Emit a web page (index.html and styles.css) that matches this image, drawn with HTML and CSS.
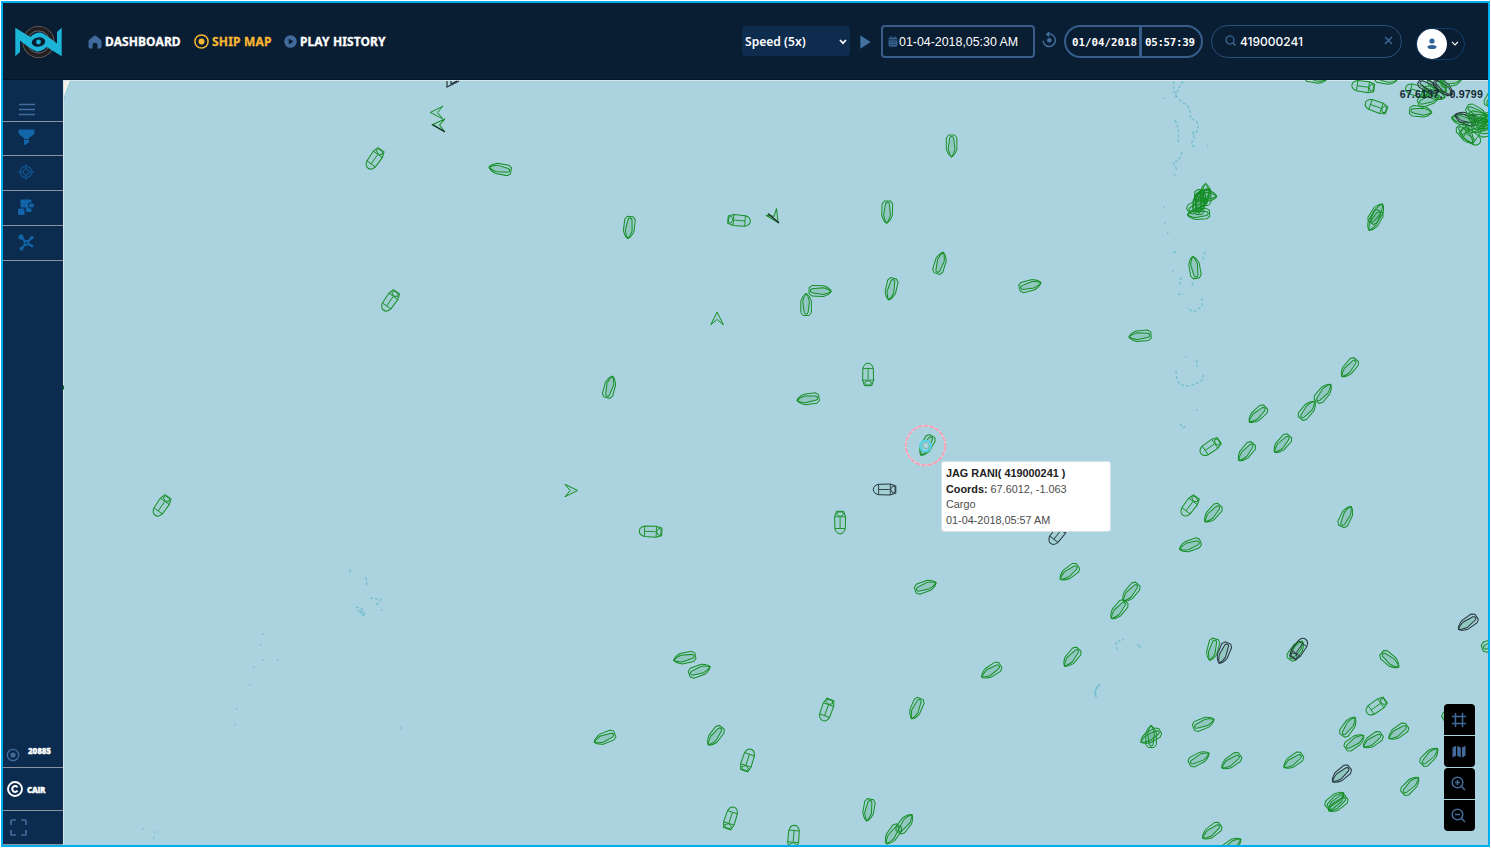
FILE: index.html
```
<!DOCTYPE html>
<html lang="en">
<head>
<meta charset="utf-8">
<title>Ship Map</title>
<link rel="stylesheet" href="styles.css">
</head>
<body>
<div class="app">
  <header class="header">
    <svg class="logo" viewBox="0 0 48 34" fill="none">
      <circle cx="24" cy="17" r="13.3" stroke="#6a6465" stroke-width="5.400"/>
      <circle cx="24" cy="17" r="13.3" stroke="#231f20" stroke-width="3.800"/>
      <path d="M24 7.500Q17 8 11 16.500L17 22Q24 29 33 20L37 16Q30 8 24 7.500Z" fill="#091d33"/>
      <path d="M.8 2.700 19 14Q15.500 18 19 20.500 24 24 31 18.500L34.500 15.500 36.500 17.500Q29 27 22 26.500 18 25.500 5.500 15.500V27L.8 31.200Z" fill="#1cb5d8"/>
      <path d="M47.200 31.200 29 20Q32.500 16 29 13.500 24 10 17 15.500L13.500 18.500 11.500 16.500Q19 7 26 7.500 30 8.500 42.500 18.500V7L47.200 2.700Z" fill="#1cb5d8"/>
      <circle cx="24" cy="17" r="3.900" fill="#091d33"/><circle cx="24" cy="17" r="2.400" fill="#1cb5d8"/>
    </svg>
    <nav class="nav">
      <a class="nav-item">
        <svg width="14" height="14" viewBox="0 0 14 14"><path d="M7 .5q.6 0 1.200.5l4.500 3.700q.8.700.8 1.600v5.500q0 1.700-1.700 1.700H9.500V10q0-2.300-2.500-2.300T4.500 10v3.500H2.200Q.5 13.500.5 11.800V6.300q0-.9.8-1.600L5.800 1Q6.400.5 7 .5Z" fill="#416b9c"/></svg>
        <span class="label w-dash">DASHBOARD</span></a>
      <a class="nav-item active">
        <svg width="15" height="15" viewBox="0 0 15 15"><circle cx="7.500" cy="7.500" r="6.600" fill="none" stroke="#f7b733" stroke-width="1.500"/><circle cx="7.500" cy="7.500" r="3" fill="#f7b733"/></svg>
        <span class="label w-ship">SHIP MAP</span></a>
      <a class="nav-item">
        <svg width="13" height="13" viewBox="0 0 13 13"><circle cx="6.500" cy="6.500" r="6.300" fill="#416b9c"/><path d="M5.200 4.200 8.800 6.500 5.200 8.800Z" fill="#091d33" stroke="#091d33" stroke-linejoin="round"/></svg>
        <span class="label w-play">PLAY HISTORY</span></a>
    </nav>
    <div class="speed"><span>Speed (5x)</span>
      <svg width="8" height="6" viewBox="0 0 8 6"><path d="M1 1 4 4.200 7 1" fill="none" stroke="#fff" stroke-width="1.700"/></svg>
    </div>
    <svg class="play" width="11" height="14" viewBox="0 0 11 14"><path d="M.3.300 10.700 7 .3 13.700Z" fill="#41719f"/></svg>
    <div class="date">
      <svg width="10" height="11" viewBox="0 0 9 11"><path d="M0 3.500V3q0-1.500 1.500-1.500H2V0h1v1.500h3V0h1v1.500h.5Q9 1.500 9 3v.5ZM0 4.300h9V9q0 1.800-1.800 1.800H1.800Q0 10.800 0 9Z" fill="#35618f"/><path d="M1.800 6h1m1.200 0h1m1.200 0h1M1.800 8.500h1m1.200 0h1m1.200 0h1" stroke="#091d33" stroke-width=".8"/></svg>
      <span>01-04-2018,05:30 AM</span></div>
    <svg class="refresh" width="15" height="16" viewBox="0 0 15 16"><path d="M6 2.200A6.200 6.200 0 1 1 1 8.800" fill="none" stroke="#41719f" stroke-width="1.400"/><path d="M7.300 0 4.800 2.300 7.300 4.600" fill="none" stroke="#41719f" stroke-width="1.400"/><circle cx="7.300" cy="8.200" r="2.300" fill="#41719f"/></svg>
    <div class="clock"><span class="clock-date">01/04/2018</span><span class="clock-time">05:57:39</span></div>
    <div class="search">
      <svg width="11" height="11" viewBox="0 0 11 11" fill="none" stroke="#41719f" stroke-width="1.200"><circle cx="5" cy="5" r="4"/><path d="m8 8 2.500 2.500"/></svg>
      <span>419000241</span>
      <svg class="clear" width="9" height="9" viewBox="0 0 9 9"><path d="m1 1 7 7M8 1 1 8" stroke="#41719f" stroke-width="1.200"/></svg>
    </div>
    <div class="user"><div class="avatar"><svg width="10" height="12" viewBox="0 0 10 12" fill="#2f639c"><circle cx="5" cy="3" r="2.600"/><ellipse cx="5" cy="9" rx="4.500" ry="2"/></svg></div>
      <svg width="8" height="5" viewBox="0 0 8 5"><path d="M1 .8 4 3.800 7 .8" fill="none" stroke="#fff" stroke-width="1.200"/></svg></div>
  </header>
  <div class="body">
    <aside class="side">
      <div class="tool menu"><svg width="18" height="13" viewBox="0 0 18 13"><path d="M1 1.500h16M1 6.500h16M1 11.500h16" stroke="#416b9c" stroke-width="1.700"/></svg></div>
      <div class="tool"><svg width="17" height="17" viewBox="0 0 17 17" fill="#1165a8"><path d="M.5 1.500Q.5.500 1.500.500h14q1 0 1 1v2Q16.500 5 15 6l-4 3v1.200H6V9L2 6Q.5 5 .5 3.500ZM6 11h5v2q0 .7-.7 1L7 16q-1 .3-1-.7Z"/></svg></div>
      <div class="tool"><svg width="16" height="16" viewBox="0 0 16 16" fill="none" stroke="#114f87" stroke-width="1.400"><circle cx="8" cy="8" r="5.800"/><circle cx="8" cy="8" r="2.800"/><path d="M8 0v6M8 10v6M0 8h6M10 8h6"/></svg></div>
      <div class="tool"><svg width="17" height="17" viewBox="0 0 17 17" fill="#1165a8"><rect x="0" y="9.500" width="6.500" height="6.500" rx="1.200"/><path d="M3.500.500H12q1.500 0 1.500 1.500v1.500h-2Q10 4 10 6.500q0 2.500 1.500 3H13.500v2.500q0 1-1 1H9q-1 0-1-1V8.500H3.500q-1 0-1-1v-6q0-1 1-1Z"/><rect x="11" y="4.500" width="5" height="4" rx="1.800"/></svg></div>
      <div class="tool"><svg width="17" height="17" viewBox="0 0 17 17" fill="#1165a8" stroke="#1165a8"><circle cx="3" cy="3" r="2.200"/><circle cx="14" cy="3.500" r="1.300"/><circle cx="3.500" cy="14.800" r="1.500"/><circle cx="14" cy="12" r="1"/><path d="m3 3 5.500 6 5.500-5.500M8.500 9l-5 5.500M8.500 9l5.500 3" fill="none" stroke-width="2"/><circle cx="8.500" cy="9" r="2.500"/><circle cx="8.500" cy="9" r="1.100" fill="#0c2c4f" stroke="none"/></svg></div>
      <div class="side-space"></div>
      <div class="count"><svg width="14" height="14" viewBox="0 0 14 14"><circle cx="7" cy="7" r="5.700" fill="none" stroke="#416b9c" stroke-width="1.300"/><circle cx="7" cy="7" r="2.500" fill="#416b9c"/></svg><b>20885</b></div>
      <div class="credit"><svg width="16" height="16" viewBox="0 0 16 16" fill="none" stroke="#fff"><circle cx="8" cy="8" r="7" stroke-width="1.900"/><path d="M10.500 6.300A2.900 2.900 0 1 0 10.500 9.700" stroke-width="2"/></svg><b>CAIR</b></div>
      <div class="full"><svg width="17" height="17" viewBox="0 0 17 17" fill="none" stroke="#416b9c" stroke-width="1.700"><path d="M1 6V2q0-1 1-1h4M11 1h4q1 0 1 1v4M16 11v4q0 1-1 1h-4M6 16H2q-1 0-1-1v-4"/></svg></div>
    </aside>
    <main class="map">
      <svg class="chart" id="chart" viewBox="63 80 1425 765">
        <defs>
          <g id="cargo"><path d="M0-11.200Q3-10 5.300-3.500V8L3 11H-3L-5.300 8V-3.500Q-3-10 0-11.200Z" fill="#0a8a1a" fill-opacity=".03"/><path d="M0-11Q2-9 3.400-3L2 8 1 9.500H-1L-2 8-3.400-3Q-2-9 0-11Z" fill="#0a8a1a" fill-opacity=".12"/></g>
          <g id="tanker"><path d="M-5.200-6Q-4-11.300 0-11.300T5.200-6L5.500 5.500 3.700 11.200H-3.700L-5.500 5.500Z" fill="#0a8a1a" fill-opacity=".05"/><path d="M-5.200-6H5.200M0-6V5M-5.500 5.700H5.500M-3.500 8 0 6 3.500 8 2.500 10.500H-2.500Z" fill="none" stroke-width=".9"/></g>
          <path id="arrow" d="M0-6.500 6.300 6.200 0 1-6.300 6.200Z" fill="#0a8a1a" fill-opacity=".06"/>
        </defs>
        <path d="M63 80h8L65 97 63 99Z" fill="#f5efe9"/><path d="M71 80 65.500 94 63.500 100" fill="none" stroke="#7dc4d6"/>
        <path d="M63 80.500H1488M63.500 80V845" stroke="#d3e6ec" stroke-width="1"/>
        <g id="reefs" fill="none" stroke="#73bdd0" stroke-width="1.300"></g>
        <g id="ships" transform="translate(-.4 .5)"></g>
        <path d="M447 81v6l12-6M451 81v3l6-3" fill="none" stroke="#26343b" stroke-width="1.200"/>
        <path d="M432.500 124.500 445 132M768 213.500l11 9.500" fill="none" stroke="#1c2a2c" stroke-width="1.400"/>
        <path d="M63 385.500h1v4h-1" fill="#0a6a2a"/>
        <circle cx="925.500" cy="445.500" r="19.700" fill="none" stroke="#e6dfe6" stroke-width="1.900"/>
        <circle cx="925.500" cy="445.500" r="19.700" fill="none" stroke="#f993ab" stroke-width="1.500" stroke-dasharray="5 1"/>
        <circle cx="925.500" cy="446" r="5.500" fill="#9ddcea" fill-opacity=".6" stroke="#4fd5f0" stroke-width="1.600"/>
        <circle cx="926" cy="445.500" r="3" fill="#b0d7df" stroke="#6daebd" stroke-width=".8"/>
      </svg>
      <div class="coords">67.6137, -0.9799</div>
      <div class="tip"><b>JAG RANI( 419000241 )</b><span><b>Coords:</b> 67.6012, -1.063</span><span>Cargo</span><span>01-04-2018,05:57 AM</span></div>
      <div class="controls">
        <button><svg width="16" height="16" viewBox="0 0 16 16"><path d="M4.500 1v14M11.500 1v14M1 4.500h14M1 11.500h14"/></svg></button>
        <button><svg width="14" height="13" viewBox="0 0 14 13"><path d="M.5 2.500 4 .800v10L.5 12.500ZM5.200.800 8.800 2.500v10L5.200 10.800ZM10 2.500 13.500.800v10L10 12.500Z" fill="#426b9c" stroke="none"/></svg></button>
        <button><svg width="15" height="15" viewBox="0 0 15 15"><circle cx="6.500" cy="6.500" r="5.300"/><path d="m10.500 10.500 3.500 3.500M4 6.500h5M6.500 4v5"/></svg></button>
        <button><svg width="15" height="15" viewBox="0 0 15 15"><circle cx="6.500" cy="6.500" r="5.300"/><path d="m10.500 10.500 3.500 3.500M4 6.500h5"/></svg></button>
      </div>
    </main>
  </div>
</div>
<script src="map.js"></script>
</body>
</html>
```
FILE: styles.css
```
* { box-sizing: border-box; }
body { margin: 0; padding: 1px; background: #fff; font-family: "Open Sans", sans-serif; }
svg { display: block; flex: none; }
.app { width: 1489px; height: 846px; border: 2px solid #00aeef; display: flex; flex-direction: column; overflow: hidden; }
.header { height: 77px; flex: none; background: #091d33; border-bottom: 1px solid #041326; display: flex; align-items: center; padding-left: 11px; padding-top: 1px; color: #fff; }
.logo { width: 49px; height: 34px; }
.nav { display: flex; gap: 12px; margin-left: 25px; width: 654px; }
.nav-item { display: flex; align-items: center; gap: 3px; color: #fff; }
.label { font: 700 12px/18px "Noto Sans", sans-serif; white-space: nowrap; -webkit-text-stroke: .3px; }
.active { color: #f7b733; }
.w-dash { width: 77px; letter-spacing: .1px; }
.w-ship { width: 60px; letter-spacing: .2px; }
.w-play { width: 90px; letter-spacing: .1px; }
.speed { width: 108px; height: 30px; background: #0d2c4e; border-radius: 4px; display: flex; align-items: center; justify-content: space-between; padding: 2px 3px 0; font: 600 12.100px "Noto Sans", sans-serif; margin: 0 10px 2px 0; }
.date { width: 154px; height: 33px; border: 2px solid #365d8b; border-radius: 4px; display: flex; align-items: center; padding-left: 5px; gap: 1px; margin-left: 10px; font: 12.400px "Liberation Sans", sans-serif; white-space: nowrap; }
.refresh { margin: 0 7px 3px 7px; }
.clock { width: 139px; height: 33px; border: 2px solid #365d8b; border-radius: 17px; display: flex; align-items: stretch; font: 700 10.800px/31px "DejaVu Sans Mono", monospace; white-space: nowrap; }
.clock-date { width: 76px; border-right: 3px solid #365d8b; padding-left: 6px; }
.clock-time { padding-left: 3px; letter-spacing: -.3px; }
.search { width: 191px; height: 33px; border: 1px solid #2b5079; border-radius: 17px; margin-left: 8px; display: flex; align-items: center; padding: 0 8px 2px 13px; font: 500 12px Inter, sans-serif; }
.search span { margin: 2px 0 0 4px; }
.clear { margin-left: auto; }
.user { width: 49px; height: 32px; border: 1px solid #123d68; border-radius: 16px; margin: 4px 0 0 14px; display: flex; align-items: center; gap: 4px; }
.avatar { width: 30px; height: 30px; border-radius: 50%; background: #fff; display: flex; align-items: center; justify-content: center; }
.body { display: flex; flex: 1; min-height: 0; }
.side { width: 60px; background: #0c2c4f; display: flex; flex-direction: column; flex: none; }
.tool { height: 35px; flex: none; border-bottom: 1px solid #8a959f; padding: 8px 0 0 15px; }
.menu { height: 41.500px; padding-top: 22.500px; }
.menu + .tool { height: 34.500px; padding-top: 7px; }
.side-space { flex: 1; }
.side b { color: #fff; font: 900 8px "Open Sans", sans-serif; letter-spacing: -.3px; -webkit-text-stroke: .3px; }
.count { height: 27px; border-bottom: 1px solid #8a959f; display: flex; padding-left: 3px; gap: 8px; }
.count svg { margin-top: 7px; }
.count b { margin-top: 4px; letter-spacing: -.1px; }
.credit { height: 43px; border-bottom: 1px solid #8a959f; display: flex; align-items: center; gap: 4px; padding-left: 4px; }
.full { height: 34px; border-bottom: 1px solid #8a959f; padding: 8px 0 0 7px; }
.map { flex: 1; position: relative; background: #aad3df; overflow: hidden; }
.chart { width: 1425px; height: 765px; }
.coords { position: absolute; top: 7px; right: 5px; font: 700 10.600px/15px "Liberation Sans", sans-serif; letter-spacing: .2px; color: #142a32; white-space: nowrap; }
.tip { position: absolute; left: 878px; top: 381px; width: 170px; height: 71px; background: #fff; border: 1px solid #d3e0e4; border-radius: 3px; padding: 4px; display: flex; flex-direction: column; font: 10.850px/15.500px "Liberation Sans", sans-serif; color: #4c4c4c; white-space: nowrap; }
.tip b { color: #222; }
.controls { position: absolute; left: 1381px; top: 624px; width: 31px; display: flex; flex-direction: column; gap: 1px; }
.controls button { width: 31px; height: 31px; padding: 0 2px 0 0; border: 0; background: #000; display: flex; align-items: center; justify-content: center; }
.controls button:nth-child(odd) { border-radius: 4px 4px 0 0; }
.controls button:nth-child(even) { border-radius: 0 0 4px 4px; }
.controls svg { fill: none; stroke: #426b9c; stroke-width: 1.500; }
```
FILE: map.js
```
// Vessel markers: kind, x, y, heading in degrees, optional dark flag.
const vessels = `
c 952 145.5 180;c 887.5 211.5 182;t 739.5 220 95;c 940.5 262.5 17;c 1030.5 285 75;c 891.5 288.5 193
c 820.5 290.5 92;c 806.5 304 0;t 868.5 374 0;c 808.5 398.5 263;a 717.5 318 0;a 775 216.5 147;t 375 158.500 215
c 500.5 168.5 280;c 629.5 227 187;a 437 112 270;a 439 124.500 272;t 390.5 300.5 215;t 162 505.5 215;c 610 386.5 15
a 571.5 490 90;t 651 531 272;t 840.5 522 180;t 885 489 270 k;c 926 586 70;c 685 657.5 258;c 700 670 70;c 605 737.5 248
c 715.5 735.5 217;t 827 709.5 200;c 916.5 708 203;t 748 759.5 18;t 731 817.5 18;t 794 836 5;c 869 809.5 190
c 905.5 823 38;c 893 834 215;c 991.5 670.5 237;c 1072 657 220;c 1069.5 572 233;c 1131 592 220;c 1119 609.5 220
c 1140.5 335.5 265;c 1349.5 367.5 220;c 1324 392.5 40;c 1308 409.5 40;c 1258 414 228;t 1210.5 446.5 235;c 1246.5 451.5 220
c 1282.5 443.5 222;t 1190 505.5 217;c 1213 513 222;c 1346.5 516 26;c 1190.5 545 250;c 1213 649 195;c 1224 652.5 203 k
c 1296.5 650 35;t 1299.5 648 35 k;c 1390.5 659.5 130;t 1376.5 706 235;c 1349 726 35;c 1204 723 68;c 1151 736 240;c 1151.5 736 0
c 1355 741.5 55;c 1373 740 235;c 1398.5 731.5 235;c 1199.5 758 62;c 1231.5 761 235;c 1293.5 760.5 235
c 1341.5 774 230 k;c 1430 756 45;c 1411 785 45;c 1335.5 799.5 50;c 1338 803.500 232;c 1212 831 232;c 1232 845 55
c 1468 622.5 235 k;c 1493 644 70;c 1453 713 60;t 1058 534 218 k;c 1195 267 350;c 1377 213 32;c 1375 220 210
c 1199 213.5 266;c 1199 203 0;c 1200 200 15;c 1203 197 40;c 1206 195 95;c 1206 194 0;c 1198 205 60
c 1316 77 100;t 1363.5 86 278;c 1386 78 100;t 1376.5 106 290;c 1421 111 95;t 1417 90 285;c 1429 99 70
c 1435 93 110;c 1438 84 130;c 1444 87 130 k;c 1429 86 120 k;c 1452 80 75;c 1463 119 280
c 1466 118 290 k;c 1477 112 120;c 1480 117 100;c 1483 125 75;c 1486 119 55;c 1490 130 80;c 1466 134 140;t 1471 136 125;c 1478 124 65;c 1493 96 30
c 927 445 210`.trim().split(/[;\n]/);
const kinds = { c: 'cargo', t: 'tanker', a: 'arrow' };
document.getElementById('ships').innerHTML = vessels.map(row => {
  const [kind, x, y, angle, dark] = row.trim().split(' ');
  return `<use href="#${kinds[kind]}" transform="translate(${x} ${y}) rotate(${angle})" stroke="${dark ? '#26343b' : '#168e24'}" stroke-width="1"/>`;
}).join('');

// Shallow reefs drawn as broken coast lines, and isolated rocks as dots.
const reefs = ['M1174 81q-3 12 8 21l5 3q5 9 3 13l6 3q4 5 1 10l-4 4', 'M1183 81l-5 9-3 8M1175 120q5 10 3 22M1193 131l1 7-3 6 4 4',
  'M1182 152l-3 8-6 3 4 7', 'M1173 253l4-2M1205 252l-2 8M1181 277l-1 8M1193 283l-2 5M1178 295l5-2M1202 298v8l-8 6-7-4',
  'M1176 371l1 9q4 6 10 6 12-2 16-7v-6M1197 360v7M1180 424l3 4 4-3', 'M1100 684l-5 7 2 7M1117 650l-1-8 8-3M1139 648l3-4',
  'M356 607l6 2 3 7-5-2 2-5M370 598l10 1M376 605l6-7M349 570l2 2M366 577l1 8'];
const rocks = [[1163,98],[1174,175],[1163,207],[1207,146],[1164,223],[1167,233],[1172,271],[1196,410],[1185,357],
  [1137,645],[253,667],[262,634],[260,645],[262,660],[277,660],[249,685],[236,709],[234,725],[400,728],[142,829],[154,832],[153,838],[381,610]];
document.getElementById('reefs').innerHTML =
  reefs.map(d => `<path d="${d}" stroke-dasharray="3 2"/>`).join('') +
  '<path d="M1100 684q-7 6-4 13M357 610l7 3"/>' +
  rocks.map(([x, y]) => `<path d="M${x} ${y}h1.500"/>`).join('');
```
